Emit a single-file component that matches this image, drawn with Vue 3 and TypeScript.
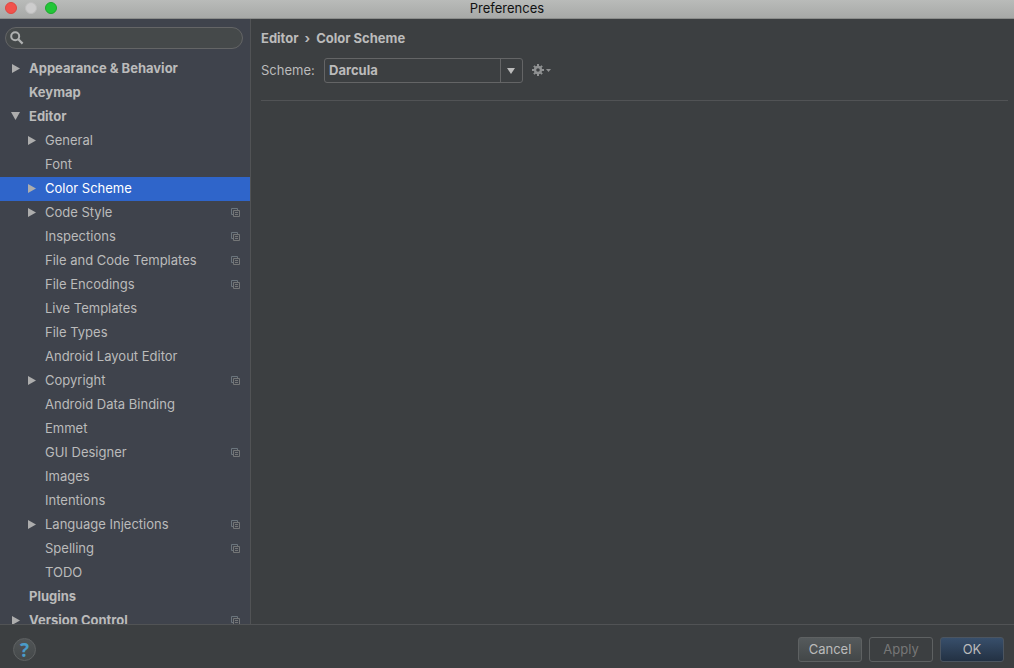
<script setup lang="ts">
import { ref } from 'vue'

interface TreeItem {
  label: string
  level: 0 | 1
  arrow?: 'right' | 'down'
  project?: boolean
}

const items: TreeItem[] = [
  { label: 'Appearance & Behavior', level: 0, arrow: 'right' },
  { label: 'Keymap', level: 0 },
  { label: 'Editor', level: 0, arrow: 'down' },
  { label: 'General', level: 1, arrow: 'right' },
  { label: 'Font', level: 1 },
  { label: 'Color Scheme', level: 1, arrow: 'right' },
  { label: 'Code Style', level: 1, arrow: 'right', project: true },
  { label: 'Inspections', level: 1, project: true },
  { label: 'File and Code Templates', level: 1, project: true },
  { label: 'File Encodings', level: 1, project: true },
  { label: 'Live Templates', level: 1 },
  { label: 'File Types', level: 1 },
  { label: 'Android Layout Editor', level: 1 },
  { label: 'Copyright', level: 1, arrow: 'right', project: true },
  { label: 'Android Data Binding', level: 1 },
  { label: 'Emmet', level: 1 },
  { label: 'GUI Designer', level: 1, project: true },
  { label: 'Images', level: 1 },
  { label: 'Intentions', level: 1 },
  { label: 'Language Injections', level: 1, arrow: 'right', project: true },
  { label: 'Spelling', level: 1, project: true },
  { label: 'TODO', level: 1 },
  { label: 'Plugins', level: 0 },
  { label: 'Version Control', level: 0, arrow: 'right', project: true },
]

const selected = ref('Color Scheme')
const query = ref('')
const scheme = ref('Darcula')
</script>

<template>
  <div class="window">
    <header class="titlebar">
      <div class="lights">
        <button class="light close" aria-label="Close"></button>
        <button class="light minimize" aria-label="Minimize" disabled></button>
        <button class="light maximize" aria-label="Zoom"></button>
      </div>
      <h1 class="title">Preferences</h1>
    </header>

    <div class="body">
      <aside class="sidebar">
        <label class="search">
          <svg class="search-icon" viewBox="0 0 14 14" aria-hidden="true">
            <circle cx="5.2" cy="5.2" r="4" fill="none" stroke="#afb1b1" stroke-width="2" />
            <path d="M8 8l4.6 4.6" stroke="#afb1b1" stroke-width="2.2" />
          </svg>
          <input v-model="query" type="text" aria-label="Search settings" />
        </label>
        <nav class="tree">
          <button
            v-for="item in items"
            :key="item.label"
            class="row"
            :class="{ child: item.level === 1, selected: item.label === selected }"
            @click="selected = item.label"
          >
            <svg class="arrow" viewBox="0 0 10 10" aria-hidden="true">
              <path v-if="item.arrow === 'right'" d="M1 1v9l8-4.5z" fill="#adadad" />
              <path v-if="item.arrow === 'down'" d="M0 1h9L4.5 9z" fill="#adadad" />
            </svg>
            <span class="label">{{ item.label }}</span>
            <svg v-if="item.project" class="project" viewBox="0 0 9 9" aria-hidden="true">
              <path d="M2 6.5H.5v-6h6V2" fill="none" stroke="#6b757d" />
              <path d="M2.5 2.5h6v6h-6z" fill="none" stroke="#747677" />
              <path d="M4 4.5h3M4 6.5h3" stroke="#747677" />
            </svg>
          </button>
        </nav>
      </aside>

      <main class="content">
        <h2 class="crumbs">
          <span>Editor</span>
          <span class="sep">›</span>
          <span>Color Scheme</span>
        </h2>
        <div class="scheme">
          <label class="scheme-label" for="scheme">Scheme:</label>
          <div class="combo">
            <select id="scheme" v-model="scheme">
              <option>Darcula</option>
              <option>Default</option>
            </select>
            <span class="combo-arrow">
              <svg viewBox="0 0 8 6" width="8" height="6" aria-hidden="true">
                <path d="M0 0h8L4 6z" fill="#bbbbbb" />
              </svg>
            </span>
          </div>
          <button class="gear" aria-label="Scheme actions">
            <svg viewBox="0 0 20 12" width="20" height="12" aria-hidden="true">
              <g stroke="#8f9192" stroke-width="2">
                <path d="M6 0v3M6 9v3M0 6h3M9 6h3M1.9 1.9l2 2M8.1 8.1l2 2M10.1 1.9l-2 2M3.9 8.1l-2 2" />
              </g>
              <circle cx="6" cy="6" r="3" fill="none" stroke="#8f9192" stroke-width="2.4" />
              <path d="M14 5h5l-2.5 3z" fill="#8f9192" />
            </svg>
          </button>
        </div>
      </main>
    </div>

    <footer class="footer">
      <button class="help" aria-label="Help">?</button>
      <div class="actions">
        <button class="btn">Cancel</button>
        <button class="btn apply" disabled>Apply</button>
        <button class="btn ok">OK</button>
      </div>
    </footer>
  </div>
</template>

<style>
body {
  margin: 0;
  background: #3c3f41;
}
</style>

<style scoped>
.window {
  display: flex;
  flex-direction: column;
  height: 100vh;
  overflow: hidden;
  background: #3c3f41;
  color: #bbbbbb;
  font: 13px/16px Inter, "Liberation Sans", sans-serif;
}
button,
input,
select {
  margin: 0;
  padding: 0;
  border: 0;
  background: none;
  color: inherit;
  font: inherit;
}
.titlebar {
  flex: none;
  display: grid;
  grid-template-columns: 1fr auto 1fr;
  align-items: start;
  height: 18px;
  border-bottom: 1px solid #8b8d8b;
  background: linear-gradient(#b9bbb9, #a7a9a7);
}
.lights {
  display: flex;
  gap: 8px;
  padding: 2px 5px;
}
.light {
  box-sizing: border-box;
  width: 12px;
  height: 12px;
  border: 1px solid #de4841;
  border-radius: 50%;
  background: #f1524c;
}
.minimize {
  border-color: #bfbfbf;
  background: #cdcdcd;
}
.maximize {
  border-color: #1aaa2b;
  background: #23c638;
}
.title {
  margin: 0;
  color: #111111;
  font-size: 13px;
  font-weight: 400;
  line-height: 17px;
}
.body {
  flex: 1;
  display: flex;
  min-height: 0;
}
.sidebar {
  flex: none;
  display: flex;
  flex-direction: column;
  width: 250px;
  overflow: hidden;
  border-right: 1px solid #515355;
  background: #3f434c;
}
.search {
  flex: none;
  display: flex;
  align-items: center;
  gap: 6px;
  height: 20px;
  margin: 8px 7px 8px 5px;
  padding: 0 4px;
  border: 1px solid #646566;
  border-radius: 11px;
  background: #45494a;
}
.search-icon {
  flex: none;
  width: 14px;
  height: 14px;
}
.search input {
  flex: 1;
  min-width: 0;
  outline: none;
}
.row {
  box-sizing: border-box;
  display: flex;
  align-items: center;
  width: 100%;
  height: 24px;
  padding: 0 10px 2px 11px;
  font-weight: 700;
  text-align: left;
}
.row.child {
  padding-left: 27px;
  font-weight: 400;
}
.row.selected {
  background: #2f65ca;
  color: #ffffff;
}
.arrow {
  flex: none;
  width: 10px;
  height: 10px;
  margin-right: 8px;
}
.label {
  flex: 1;
  white-space: nowrap;
}
.project {
  flex: none;
  width: 9px;
  height: 9px;
}
.content {
  flex: 1;
  min-width: 0;
  padding: 11px 6px 0 10px;
}
.crumbs {
  display: flex;
  gap: 6px;
  margin: 0;
  font-size: 13px;
  font-weight: 700;
  line-height: 16px;
}
.scheme {
  display: flex;
  align-items: center;
  padding: 12px 0 17px;
  border-bottom: 1px solid #515355;
}
.scheme-label {
  width: 63px;
  padding-bottom: 2px;
}
.combo {
  display: grid;
  grid-template-columns: 1fr 22px;
  box-sizing: border-box;
  width: 199px;
  height: 25px;
  border: 1px solid #646566;
  border-radius: 3px;
}
.combo select {
  grid-area: 1 / 1 / 2 / 3;
  appearance: none;
  padding: 0 0 2px 4px;
  font-weight: 700;
}
.combo-arrow {
  grid-area: 1 / 2;
  display: flex;
  align-items: center;
  justify-content: center;
  padding-right: 1px;
  border-left: 1px solid #646566;
  pointer-events: none;
}
.gear {
  display: flex;
  height: 14px;
  margin-left: 9px;
}
.footer {
  flex: none;
  display: flex;
  align-items: center;
  justify-content: space-between;
  box-sizing: border-box;
  height: 44px;
  padding: 6px 10px 0 13px;
  border-top: 1px solid #515355;
}
.help {
  box-sizing: border-box;
  width: 23px;
  height: 23px;
  border: 1px solid #5e6162;
  border-radius: 50%;
  background: linear-gradient(#505456, #45494a);
  color: #4a9bc9;
  font: bold 19px/20px "Open Sans", sans-serif;
}
.actions {
  display: flex;
  gap: 7px;
}
.btn {
  box-sizing: border-box;
  width: 64px;
  height: 25px;
  padding-bottom: 1px;
  border: 1px solid #5e6162;
  border-radius: 3px;
  background: linear-gradient(#555a5c, #434748);
}
.btn.apply {
  background: none;
  color: #777777;
}
.btn.ok {
  border-color: #4c5560;
  background: linear-gradient(#384f6b, #233143);
}
</style>
